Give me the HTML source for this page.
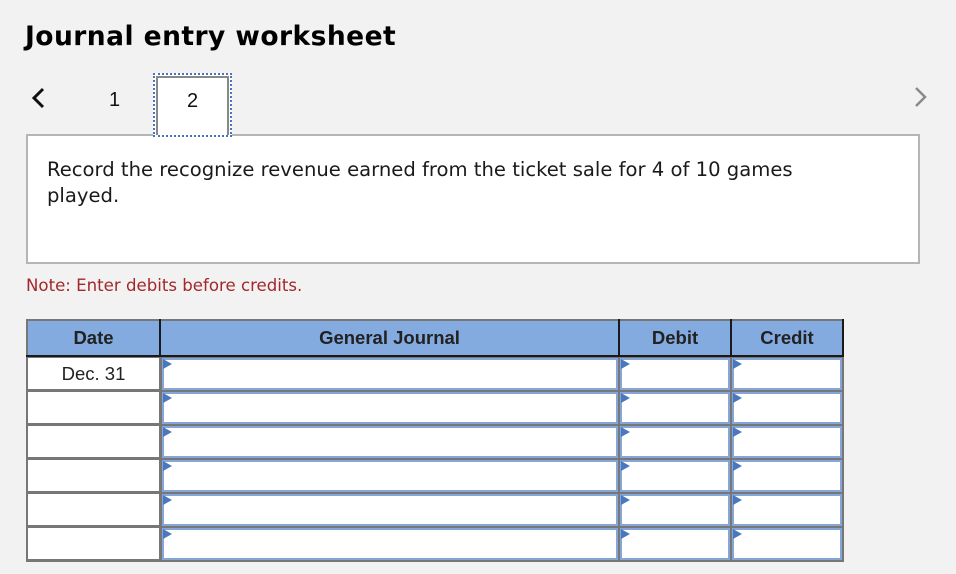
<!DOCTYPE html>
<html><head><style>
body{margin:0;width:956px;height:574px;background:#f2f2f2;position:relative;overflow:hidden;font-family:"DejaVu Sans",Verdana,sans-serif;}
.a{position:absolute;}
.inp{position:absolute;background:#fff;border:2px solid #86a6d8;box-sizing:border-box;}
.inp:before{content:"";position:absolute;left:-1px;top:-1px;border-left:9px solid #4a78c0;border-top:5px solid transparent;border-bottom:5px solid transparent;}
.hd{position:absolute;top:0;height:36px;text-align:center;font:bold 18.5px "Liberation Sans",Arial,sans-serif;line-height:36px;color:#222;}
</style></head><body>
<div class="a" style="left:25px;top:21px;font-size:26.5px;font-weight:bold;color:#000;letter-spacing:0.45px">Journal entry worksheet</div>
<svg class="a" style="left:28px;top:86px" width="20" height="24"><path d="M15 3 L6 12 L15 21" fill="none" stroke="#111" stroke-width="3"/></svg>
<svg class="a" style="left:912px;top:84px" width="20" height="26"><path d="M4 4 L13 13 L4 22" fill="none" stroke="#8a8a8a" stroke-width="2.5"/></svg>
<div class="a" style="left:109px;top:89px;font:20px 'Liberation Sans',Arial,sans-serif;color:#111">1</div>
<div class="a" style="left:26px;top:134px;width:894px;height:130px;box-sizing:border-box;border:2px solid #b5b5b5;background:#fff"></div>
<div class="a" style="left:153px;top:73px;width:79px;height:64px;box-sizing:border-box;background:#fff;border:2px dotted #4a74b8"><div style="position:absolute;inset:1px 1px 0 1px;border:2px solid #888;border-bottom:none"></div><div style="position:absolute;left:0;right:0;top:15px;text-align:center;font:20px 'Liberation Sans',Arial,sans-serif;color:#111">2</div></div>
<div class="a" style="left:47px;top:157px;width:800px;font-size:19.6px;line-height:26px;color:#1a1a1a">Record the recognize revenue earned from the ticket sale for 4 of 10 games played.</div>
<div class="a" style="left:26px;top:276px;font-size:16.6px;color:#a3282a">Note: Enter debits before credits.</div>

<div class="a" style="left:26px;top:319px;width:818px;height:243px;background:#777">
  <div class="a" style="left:2px;top:2px;width:814px;height:36px;background:#84abe0"></div>
  <div class="a" style="left:0;top:36px;width:818px;height:2px;background:#1a1a1a"></div>
  <div class="a" style="left:133px;top:0;width:2px;height:38px;background:#1a1a1a"></div>
  <div class="a" style="left:592px;top:0;width:2px;height:38px;background:#1a1a1a"></div>
  <div class="a" style="left:704px;top:0;width:2px;height:38px;background:#1a1a1a"></div>
  <div class="a" style="left:816px;top:0;width:2px;height:38px;background:#1a1a1a"></div>
  <div class="hd" style="left:2px;width:131px;top:1px">Date</div>
  <div class="hd" style="left:135px;width:457px;top:1px">General Journal</div>
  <div class="hd" style="left:594px;width:110px;top:1px">Debit</div>
  <div class="hd" style="left:706px;width:110px;top:1px">Credit</div>
</div>
<div id="rows"></div>
<script>
var h='';
for(var i=0;i<6;i++){
 var y=357+i*34;
 h+='<div class="a" style="left:28px;top:'+(y+1)+'px;width:131px;height:31px;background:#fff;text-align:center;font:18.5px \'Liberation Sans\',Arial,sans-serif;line-height:31px;color:#222">'+(i==0?'Dec. 31':'')+'</div>';
 h+='<div class="inp" style="left:162px;top:'+(y+1)+'px;width:456px;height:32px"></div>';
 h+='<div class="inp" style="left:620px;top:'+(y+1)+'px;width:110px;height:32px"></div>';
 h+='<div class="inp" style="left:732px;top:'+(y+1)+'px;width:110px;height:32px"></div>';
}
document.getElementById('rows').innerHTML=h;
</script>
</body></html>
